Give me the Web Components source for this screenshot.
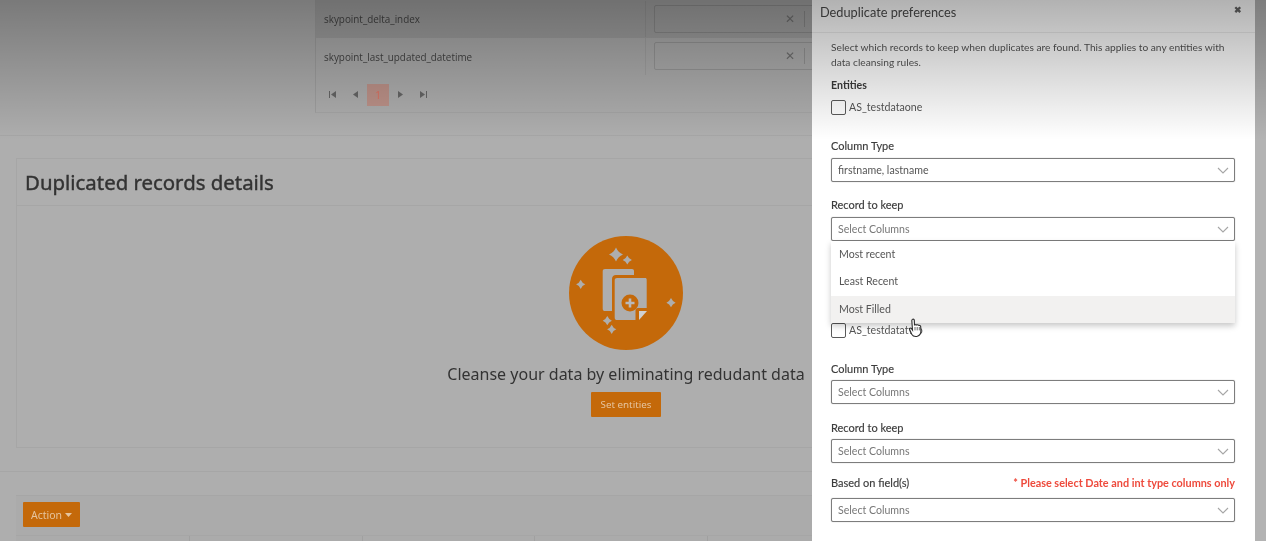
<!DOCTYPE html>
<html>
<head>
<meta charset="utf-8">
<title>Deduplicate preferences</title>
<style>
  html, body { margin: 0; height: 100%; overflow: hidden; background: #aeaeae; }
  body { font-family: "Noto Sans", "Open Sans", sans-serif; }
</style>
</head>
<body>
<dedupe-page></dedupe-page>

<script>
const CHEVRON = `<svg width="12" height="7" viewBox="0 0 12 7"><path d="M1 1l5 5 5-5" fill="none" stroke="#a6a6a6" stroke-width="1.1"/></svg>`;

class SelectField extends HTMLElement {
    constructor() {
        super();
        const root = this.attachShadow({ mode: 'open' });
        const placeholder = this.hasAttribute('value') ? '' : 'placeholder';
        root.innerHTML = `
          <style>
            :host { display: block; position: relative; }
            .head { display: flex; justify-content: space-between; align-items: baseline; height: 16px; margin-bottom: var(--label-gap, 4px); }
            label { font-size: 11px; font-weight: 400; color: #3c3c3c; line-height: 16px; -webkit-text-stroke: .15px #3c3c3c; }
            .box {
              box-sizing: border-box; height: 24px; display: flex; align-items: center; justify-content: space-between;
              padding: 0 5px 0 6px; background: #fff; border: 1px solid #7d7d7d; border-radius: 2px;
              font-size: 10.600px; color: #555; box-shadow: 0 0 1px #999;
            }
            .placeholder { color: #777; }
            ::slotted([slot=note]) { font-size: 10.850px; font-weight: 700; color: #ee4a3c; }
          </style>
          <div class="head"><label>${this.getAttribute('label')}</label><slot name="note"></slot></div>
          <div class="box"><span class="${placeholder}">${this.getAttribute('value') || 'Select Columns'}</span>${CHEVRON}</div>
          <slot></slot>
        `;
    }
}
customElements.define('select-field', SelectField);

class SelectMenu extends HTMLElement {
    constructor() {
        super();
        this.attachShadow({ mode: 'open' }).innerHTML = `
          <style>
            :host {
              display: block; position: absolute; left: 0; right: 0; top: 44px; z-index: 2;
              background: #fff; box-shadow: 0 3px 6px rgba(0,0,0,.22);
              font-size: 10.600px; color: #555;
            }
            div { height: 27.300px; line-height: 27px; padding-left: 8px; }
            .hover { background: #f2f1f0; }
          </style>
          <div>Most recent</div>
          <div>Least Recent</div>
          <div class="hover">Most Filled</div>
        `;
    }
}
customElements.define('select-menu', SelectMenu);

class EntityCheck extends HTMLElement {
    constructor() {
        super();
        this.attachShadow({ mode: 'open' }).innerHTML = `
          <style>
            :host { display: flex; align-items: center; gap: 3px; height: 16px; font-size: 10.600px; color: #555; }
            i { box-sizing: border-box; width: 15px; height: 15px; border: 1px solid #5a5a5a; border-radius: 2px; background: #fff; }
          </style>
          <i></i><slot></slot>
        `;
    }
}
customElements.define('entity-check', EntityCheck);

class SideDrawer extends HTMLElement {
    constructor() {
        super();
        this.attachShadow({ mode: 'open' }).innerHTML = `
          <style>
            :host {
              display: flex; position: absolute; top: 0; right: 0; bottom: 0; width: 454px;
              background: #fff; color: #444; font-family: Lato, "Noto Sans", sans-serif;
            }
            .panel { flex: 1; min-width: 0; }
            .rail { width: 11px; background: #b3b3b3; }
            header {
              box-sizing: border-box; height: 33px; padding: 3px 0 0 8px; display: flex; justify-content: space-between;
              border-bottom: 1px solid rgba(0,0,0,.07); font-size: 12.750px; line-height: 19px; color: #4a4a4a;
            }
            .close { font-size: 9px; line-height: 13px; font-weight: 700; color: #666; margin-right: 13px; }
            .body { padding: 7px 20px 0 19px; position: relative; }
            p { margin: 0; font-size: 10.200px; line-height: 15px; color: #555; }
            h4 { margin: 7px 0 6px; font-size: 10.600px; font-weight: 700; line-height: 16px; color: #3a3a3a; }
            .cursor { position: absolute; left: 97px; top: 285px; z-index: 3; }
          </style>
          <div class="panel">
            <header><span>Deduplicate preferences</span><span class="close">&#10006;</span></header>
            <div class="body">
              <p>Select which records to keep when duplicates are found. This applies to any entities with data cleansing rules.</p>
              <h4>Entities</h4>
              <slot></slot>
              <svg class="cursor" width="14" height="20" viewBox="0 0 14 20">
                <path d="M3.400 1.400c.9-.6 1.800 0 1.900 1l.2 5.100c0-1 1.900-1.200 2.100 0 .1-1 2-.9 2.100.3.3-.7 1.900-.4 2 .8l.2 4.400c0 2.800-1.300 4.600-3.600 5.300-2.600.5-4.500-.2-5.600-2.100L.6 11.400c-.5-1.100 1-2 1.900-.8l1 1.400L2.800 2.600c0-.5.2-1 .6-1.200z" fill="#fff" stroke="#2c2c2c" stroke-width="1.100"/>
                <path d="M6 9v3.400M8.200 9v3.400M10.300 9v3.400" stroke="#2c2c2c" stroke-width=".7"/>
              </svg>
            </div>
          </div>
          <div class="rail"></div>
        `;
    }
}
customElements.define('side-drawer', SideDrawer);

class DupeIcon extends HTMLElement {
    constructor() {
        super();
        const star = (x, y, r) => `<path d="M${x} ${y - r}Q${x + r * .3} ${y - r * .3} ${x + r} ${y}Q${x + r * .3} ${y + r * .3} ${x} ${y + r}Q${x - r * .3} ${y + r * .3} ${x - r} ${y}Q${x - r * .3} ${y - r * .3} ${x} ${y - r}z"/>`;
        this.attachShadow({ mode: 'open' }).innerHTML = `
          <style>:host { display: block; width: 114px; height: 114px; } svg { display: block; }</style>
          <svg width="114" height="114" viewBox="0 0 114 114">
            <circle cx="57" cy="57" r="57" fill="#c4690a"/>
            <g fill="#aeaeae">
              ${star(47, 18.5, 7)}${star(58.3, 24, 4.6)}${star(11.7, 48.3, 4.6)}${star(102, 66.7, 4.6)}${star(38.3, 84.7, 4.6)}${star(42.7, 93.3, 4.6)}
              <path d="M36 33h27c1.200 0 2 .8 2 2v4H47c-2.400 0-4 1.600-4 4v32h-7c-1.400 0-2.300-.9-2.300-2.300V35.300C33.700 33.900 34.600 33 36 33z"/>
              <path d="M48 42h28c1.200 0 1.700.6 1.700 1.800V72H69c-1.500 0-2.500 1-2.500 2.500V84H48c-1.300 0-2.300-.9-2.300-2.300V44.300c0-1.400 1-2.300 2.300-2.300z"/>
              <path d="M70 75h8l-8 9z" fill="#d0d0d0"/>
            </g>
            <circle cx="61" cy="67" r="8.500" fill="#c4690a"/>
            <path d="M61 62.500v9M56.500 67h9" stroke="#b9b9b9" stroke-width="2.600"/>
          </svg>
        `;
    }
}
customElements.define('dupe-icon', DupeIcon);

class DupeCard extends HTMLElement {
    constructor() {
        super();
        this.attachShadow({ mode: 'open' }).innerHTML = `
          <style>
            :host { display: block; box-sizing: border-box; height: 290px; margin: 0 30px 0 16px; border: 1px solid #a6a6a6; }
            h2 { margin: 0; box-sizing: border-box; height: 47px; padding: 0 8px; line-height: 47px; font-size: 20.400px; font-weight: 400; -webkit-text-stroke: .4px #333; color: #333; border-bottom: 1px solid #a6a6a6; }
            .empty { display: flex; flex-direction: column; align-items: center; padding-top: 30px; }
            span { margin-top: 12px; font-size: 16px; line-height: 24px; color: #333; }
            button {
              margin-top: 6px; width: 70px; height: 25px; border: 0; border-radius: 1px; padding: 0;
              background: #c4690a; color: #e5c49f; font: 9.800px "Noto Sans", sans-serif;
            }
          </style>
          <h2>Duplicated records details</h2>
          <div class="empty">
            <dupe-icon></dupe-icon>
            <span>Cleanse your data by eliminating redudant data</span>
            <button>Set entities</button>
          </div>
        `;
    }
}
customElements.define('dupe-card', DupeCard);

class ColumnTable extends HTMLElement {
    constructor() {
        super();
        const row = (name, cls) => `
          <div class="row ${cls}">
            <div class="name">${name}</div>
            <div class="cell"><div class="input"><b>&#10005;</b><u></u></div></div>
          </div>`;
        const tri = (d) => `<svg width="7" height="7" viewBox="0 0 7 7"><path d="${d}" fill="#666"/></svg>`;
        this.attachShadow({ mode: 'open' }).innerHTML = `
          <style>
            :host { display: block; margin-left: 315px; height: 112px; border-left: 1px solid #a0a0a0; border-bottom: 1px solid #a6a6a6; font-size: 9.900px; color: #444; }
            .row { display: flex; height: 37.500px; align-items: center; box-sizing: border-box; padding-top: 1px; }
            .dark { background: rgba(0,0,0,.07); }
            .name { width: 321px; padding-left: 8px; font-family: "Open Sans", sans-serif; }
            .cell { height: 100%; margin-top: -1px; display: flex; align-items: center; border-left: 1px solid rgba(0,0,0,.06); padding-left: 8px; }
            .input { box-sizing: border-box; width: 200px; height: 28px; border: 1px solid rgba(0,0,0,.12); border-radius: 2px; position: relative; }
            b { position: absolute; left: 130px; top: 5px; font-size: 12px; line-height: 16px; font-weight: 400; color: #707070; }
            u { position: absolute; left: 149px; top: 5px; width: 1px; height: 16px; background: rgba(0,0,0,.15); }
            .pager { display: flex; align-items: center; height: 37px; padding: 2px 0 0 13px; box-sizing: border-box; gap: 16px; }
            .pager em { width: 22px; height: 22px; margin: 0 -8px; background: #bd9289; color: #e0705f; font-style: normal; text-align: center; line-height: 22px; }
          </style>
          ${row('skypoint_delta_index', 'dark')}
          ${row('skypoint_last_updated_datetime', '')}
          <div class="pager">
            ${tri('M0 0h1v7H0zM7 0v7L2 3.500z')}
            ${tri('M6 0v7L1 3.500z')}
            <em>1</em>
            ${tri('M1 0v7l5-3.500z')}
            ${tri('M0 0v7l5-3.500zM6 0h1v7H6z')}
          </div>
        `;
    }
}
customElements.define('column-table', ColumnTable);

class ActionBar extends HTMLElement {
    constructor() {
        super();
        this.attachShadow({ mode: 'open' }).innerHTML = `
          <style>
            :host { display: block; margin: 0 0 0 16px; border-top: 1px solid #a6a6a6; background: rgba(0,0,0,.015); }
            .bar { padding: 6px 0 8px 7px; }
            button { display: flex; align-items: center; justify-content: center; gap: 3px; width: 57px; height: 25px; border: 0; border-radius: 1px; padding: 0; background: #c4690a; color: #e5c49f; font: 10.500px "Noto Sans", sans-serif; }
            button svg { display: block; }
            .cols { display: grid; grid-template-columns: 174px repeat(4, 172.500px); height: 12px; border-top: 1px solid #a6a6a6; }
            .cols div { border-right: 1px solid #a0a0a0; }
          </style>
          <div class="bar"><button>Action <svg width="7" height="4" viewBox="0 0 7 4"><path d="M0 0h7L3.500 4z" fill="#e5c49f"/></svg></button></div>
          <div class="cols"><div></div><div></div><div></div><div></div><div></div></div>
        `;
    }
}
customElements.define('action-bar', ActionBar);

class DedupePage extends HTMLElement {
    constructor() {
        super();
        this.attachShadow({ mode: 'open' }).innerHTML = `
          <style>
            :host { display: block; position: relative; width: 1266px; height: 541px; overflow: hidden; background: #aeaeae; filter: blur(.5px); }
            hr { margin: 0; border: 0; border-top: 1px solid #a6a6a6; }
            .top { margin-top: 22px; margin-bottom: 22px; }
            .bottom { margin-top: 23px; margin-bottom: 23px; }
            .shade { position: absolute; left: 0; right: 0; top: 0; height: 140px; background: linear-gradient(rgba(0,0,0,.3), rgba(0,0,0,0)); pointer-events: none; z-index: 5; }
            .group { display: flex; flex-direction: column; }
            select-field.type { margin-top: 23px; }
            select-field.keep { margin-top: 15px; }
            entity-check.second { margin-top: 81px; }
            select-field.second-type { margin-top: 23px; --label-gap: 3px; }
            select-field.second-keep { margin-top: 16px; --label-gap: 3px; }
            select-field.based { margin-top: 12px; --label-gap: 7px; }
          </style>
          <column-table></column-table>
          <hr class="top">
          <dupe-card></dupe-card>
          <hr class="bottom">
          <action-bar></action-bar>
          <side-drawer>
            <div class="group">
              <entity-check class="first">AS_testdataone</entity-check>
              <select-field class="type" label="Column Type" value="firstname, lastname"></select-field>
              <select-field class="keep" label="Record to keep"><select-menu></select-menu></select-field>
              <entity-check class="second">AS_testdatatwo</entity-check>
              <select-field class="second-type" label="Column Type"></select-field>
              <select-field class="second-keep" label="Record to keep"></select-field>
              <select-field class="based" label="Based on field(s)"><span slot="note">* Please select Date and int type columns only</span></select-field>
            </div>
          </side-drawer>
          <div class="shade"></div>
        `;
    }
}
customElements.define('dedupe-page', DedupePage);
</script>
</body>
</html>
